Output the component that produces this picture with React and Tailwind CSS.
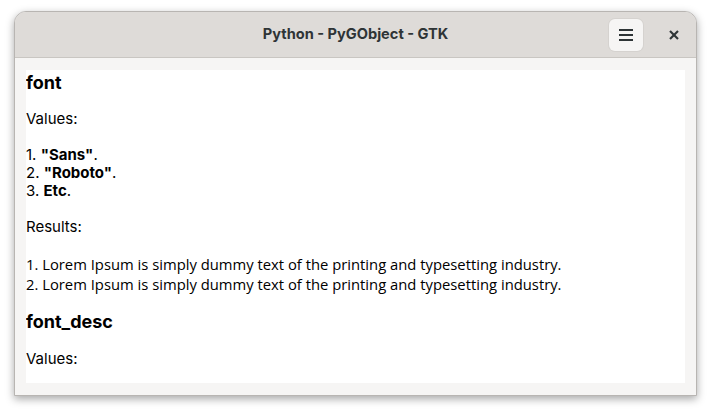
function Line({ children, className = "" }) {
    return <div className={`h-[18px] leading-[18px] whitespace-nowrap ${className}`}>{children}</div>;
}

export default function App() {
    return (
        <div className="w-[711px] h-[413px] bg-white pt-[11px] pl-[14px] font-['Inter',sans-serif]">
            <div className="w-[683px] h-[385px] flex flex-col rounded-t-[12px] overflow-hidden border border-[#b8b5b2] shadow-[0_3px_9px_rgba(0,0,0,0.35)] bg-[#f6f5f4]">
                {/* header bar */}
                <div className="relative h-[46px] shrink-0 flex items-center justify-center bg-[#dedbd8] border-b border-[#c9c6c2]">
                    <span className="text-[14.6px] font-bold text-[#2e3436] font-['Inter','Noto Sans',sans-serif]">
                        Python - PyGObject - GTK
                    </span>
                    <div className="absolute right-[53px] top-[7px] w-[34px] h-[32px] rounded-[6px] bg-[#f6f5f4] flex items-center justify-center shadow-[0_0_0_1px_rgba(0,0,0,0.04)]">
                        <svg width="16" height="14" viewBox="0 0 16 14">
                            <g stroke="#2e3436" strokeWidth="2" strokeLinecap="butt">
                                <line x1="1" y1="2" x2="15" y2="2" />
                                <line x1="1" y1="7" x2="15" y2="7" />
                                <line x1="1" y1="12" x2="15" y2="12" />
                            </g>
                        </svg>
                    </div>
                    <div className="absolute right-[17px] top-[18px] w-[10px] h-[10px] flex items-center justify-center">
                        <svg width="10" height="10" viewBox="0 0 10 10">
                            <g stroke="#2e3436" strokeWidth="2.2" strokeLinecap="butt">
                                <line x1="1" y1="1" x2="9" y2="9" />
                                <line x1="9" y1="1" x2="1" y2="9" />
                            </g>
                        </svg>
                    </div>
                </div>

                {/* content */}
                <div className="flex-1 px-[11px] pt-[12px] pb-[12px] overflow-hidden">
                    <div className="h-full bg-white overflow-hidden text-[15px] text-black pt-[2px]">
                        <div className="h-[22px] leading-[22px] text-[18px] font-bold">font</div>
                        <Line className="mt-[16px]">Values:</Line>
                        <Line className="mt-[18px]">1. <b>"Sans"</b>.</Line>
                        <Line>2. <b>"Roboto"</b>.</Line>
                        <Line>3. <b>Etc</b>.</Line>
                        <Line className="mt-[18px]">Results:</Line>
                        <div className="mt-[18px] font-['Open_Sans',sans-serif] text-[14.8px] leading-[20px] whitespace-nowrap">
                            <div>1. Lorem Ipsum is simply dummy text of the printing and typesetting industry.</div>
                            <div>2. Lorem Ipsum is simply dummy text of the printing and typesetting industry.</div>
                        </div>
                        <div className="mt-[17px] h-[22px] leading-[22px] text-[18px] font-bold">font_desc</div>
                        <Line className="mt-[17px]">Values:</Line>
                    </div>
                </div>
            </div>
        </div>
    );
}
